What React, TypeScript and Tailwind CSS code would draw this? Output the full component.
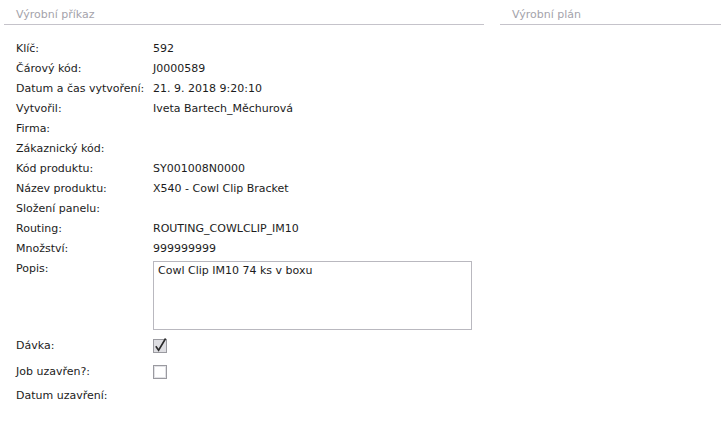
import React from "react";

const rows: [string, string][] = [
  ["Klíč:", "592"],
  ["Čárový kód:", "J0000589"],
  ["Datum a čas vytvoření:", "21. 9. 2018 9:20:10"],
  ["Vytvořil:", "Iveta Bartech_Měchurová"],
  ["Firma:", ""],
  ["Zákaznický kód:", ""],
  ["Kód produktu:", "SY001008N0000"],
  ["Název produktu:", "X540 - Cowl Clip Bracket"],
  ["Složení panelu:", ""],
  ["Routing:", "ROUTING_COWLCLIP_IM10"],
  ["Množství:", "999999999"],
];

function Check({ checked }: { checked: boolean }) {
  return (
    <svg width="14" height="14" viewBox="0 0 14 14" className="block overflow-visible">
      <rect x="0.5" y="0.5" width="13" height="13" fill={checked ? "#dedee2" : "#ffffff"} stroke="#9a9aa0" />
      {!checked && <rect x="1.5" y="1.5" width="11" height="11" fill="#ffffff" stroke="#e2e2e6" />}
      {checked && (
        <path d="M2.8 7.2 L5.6 11.2 L12.6 -0.5" fill="none" stroke="#2a2a2a" strokeWidth="1.6" />
      )}
    </svg>
  );
}

export default function App() {
  return (
    <div
      className="w-[721px] h-[426px] bg-white text-[#1c1c1c] text-[11px] leading-[14px] flex"
      style={{ fontFamily: '"DejaVu Sans", Verdana, sans-serif' }}
    >
      <div className="ml-[4px] w-[480px]">
        <div className="h-[25px] border-b border-[#c5c3ca] pl-[12px] pt-[8px] text-[#a4a3ab]">
          Výrobní příkaz
        </div>
        <div className="pt-[14px] pl-[12px]">
          {rows.map(([l, v]) => (
            <div key={l} className="flex h-[20px] items-center">
              <div className="w-[137px]">{l}</div>
              <div>{v}</div>
            </div>
          ))}
          <div className="flex mt-[2px]">
            <div className="w-[137px] pt-[1px]">Popis:</div>
            <div className="w-[319px] h-[69px] border border-[#b9b8bf] px-[4px] pt-[2px]">
              Cowl Clip IM10 74 ks v boxu
            </div>
          </div>
          <div className="flex h-[26px] mt-[3px] items-center">
            <div className="w-[137px]">Dávka:</div>
            <Check checked />
          </div>
          <div className="flex h-[26px] items-center">
            <div className="w-[137px]">Job uzavřen?:</div>
            <Check checked={false} />
          </div>
          <div className="flex h-[20px] mt-[1px] items-center">
            <div className="w-[137px]">Datum uzavření:</div>
          </div>
        </div>
      </div>
      <div className="ml-[16px] flex-1">
        <div className="h-[25px] border-b border-[#c5c3ca] pl-[12px] pt-[8px] text-[#a4a3ab]">
          Výrobní plán
        </div>
      </div>
    </div>
  );
}
